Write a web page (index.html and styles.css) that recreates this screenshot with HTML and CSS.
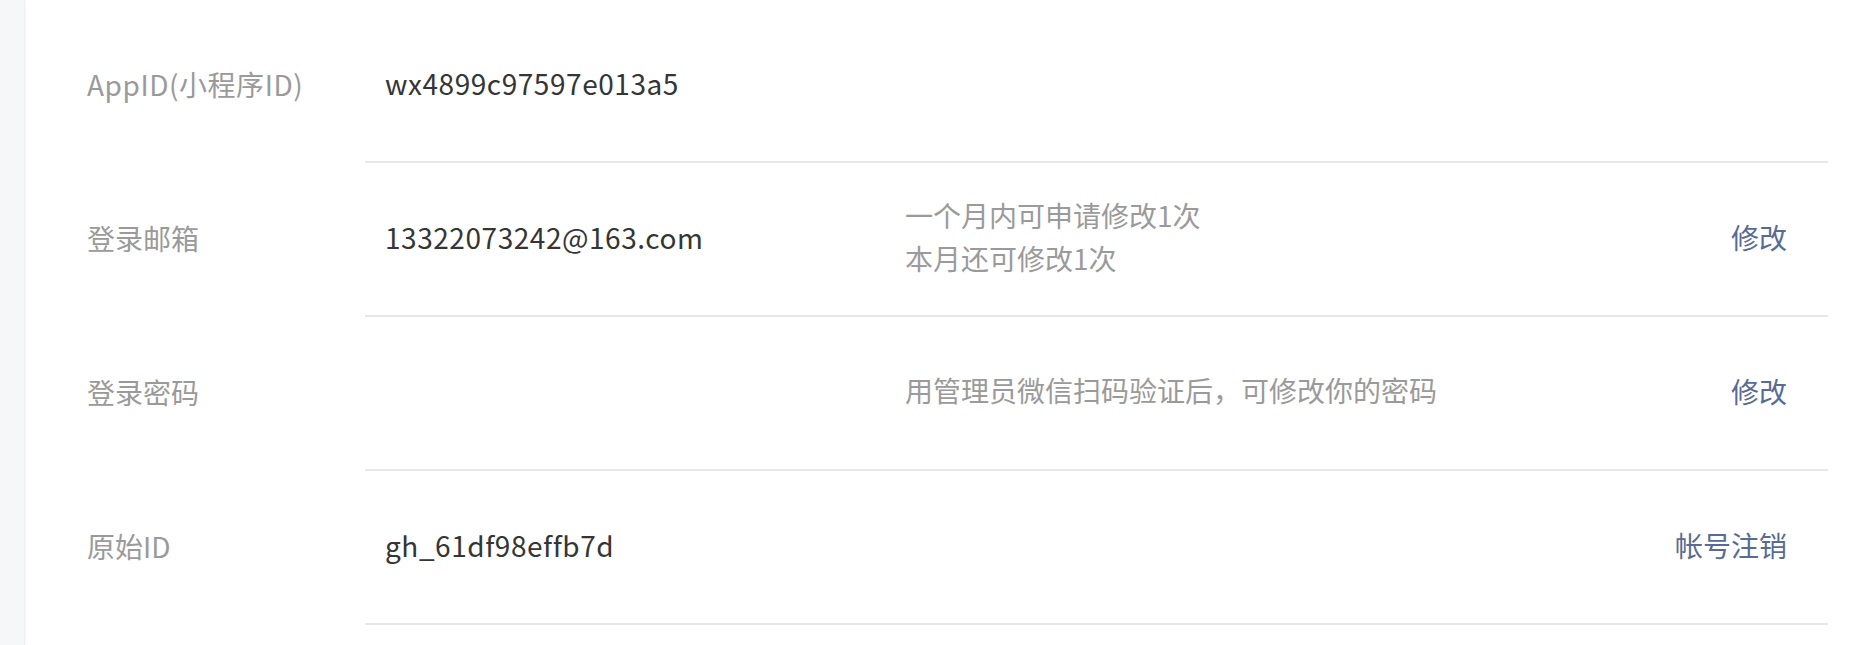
FILE: index.html
```html
<!DOCTYPE html>
<html lang="zh-CN">
<head>
<meta charset="utf-8">
<title>帐号信息</title>
<link rel="stylesheet" href="styles.css">
</head>
<body>
<div class="page">
  <aside class="side"></aside>
  <main class="main">
    <div class="list">
      <div class="row">
        <div class="label latin">AppID(小程序ID)</div>
        <div class="body">
          <div class="value latin">wx4899c97597e013a5</div>
          <div class="tips"></div>
          <div class="action"></div>
        </div>
      </div>
      <div class="row">
        <div class="label">登录邮箱</div>
        <div class="body">
          <div class="value latin">13322073242@163.com</div>
          <div class="tips"><p>一个月内可申请修改1次</p><p>本月还可修改1次</p></div>
          <div class="action"><a href="#">修改</a></div>
        </div>
      </div>
      <div class="row">
        <div class="label">登录密码</div>
        <div class="body">
          <div class="value"></div>
          <div class="tips"><p>用管理员微信扫码验证后，可修改你的密码</p></div>
          <div class="action"><a href="#">修改</a></div>
        </div>
      </div>
      <div class="row">
        <div class="label">原始ID</div>
        <div class="body">
          <div class="value latin">gh_61df98effb7d</div>
          <div class="tips"></div>
          <div class="action"><a href="#">帐号注销</a></div>
        </div>
      </div>
    </div>
  </main>
</div>
</body>
</html>
```
FILE: styles.css
```css
html, body {
  margin: 0;
  padding: 0;
  background: #ffffff;
}
body {
  font-family: "Noto Sans CJK SC", "Noto Sans", sans-serif;
  font-size: 28px;
  color: #353535;
  overflow: hidden;
}
.page {
  display: flex;
  height: 645px;
}
.side {
  width: 24px;
  flex: none;
  background: #f6f7f9;
  border-right: 1px solid #eeeff2;
  box-shadow: 1px 0 3px rgba(0, 0, 0, 0.04);
}
.main {
  flex: 1;
  padding: 9px 40px 0 62px;
}
.list {
  display: flex;
  flex-direction: column;
}
.row {
  display: flex;
  height: 154px;
}
.label {
  width: 278px;
  flex: none;
  display: flex;
  align-items: center;
  padding-bottom: 5px;
  color: #9a9a9a;
}
.latin {
  letter-spacing: 0.55px;
}
.body {
  flex: 1;
  display: flex;
  align-items: center;
  border-bottom: 2px solid #e7e7eb;
  padding: 0 41px 5px 20px;
}
.value {
  width: 520px;
  flex: none;
}
.tips {
  flex: 1;
  color: #9a9a9a;
  line-height: 43px;
}
.tips p {
  margin: 0;
}
.action a {
  color: #576b95;
  text-decoration: none;
}
```
